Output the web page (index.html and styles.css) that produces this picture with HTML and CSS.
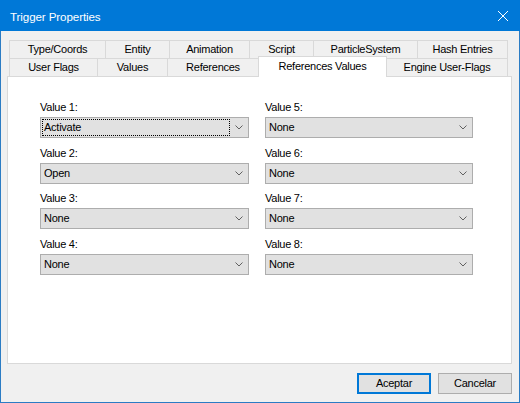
FILE: index.html
```html
<!DOCTYPE html>
<html>
<head>
<meta charset="utf-8">
<link rel="stylesheet" href="styles.css">
</head>
<body>
<div class="window">
  <div class="titlebar">
    <span class="title">Trigger Properties</span>
    <svg class="close" width="12" height="12" viewBox="0 0 12 12"><path d="M1 1 L11 11 M11 1 L1 11" stroke="#fff" stroke-width="1" fill="none"/></svg>
  </div>
  <div class="client">
    <div class="tabctl">
      <div class="tabrow">
        <div class="tab t-type">Type/Coords</div>
        <div class="tab t-entity">Entity</div>
        <div class="tab t-anim">Animation</div>
        <div class="tab t-script">Script</div>
        <div class="tab t-particle">ParticleSystem</div>
        <div class="tab t-hash last">Hash Entries</div>
      </div>
      <div class="tabrow">
        <div class="tab t-user">User Flags</div>
        <div class="tab t-values">Values</div>
        <div class="tab t-refs">References</div>
        <div class="tab t-refvals selected">References Values</div>
        <div class="tab t-engine last">Engine User-Flags</div>
      </div>
      <div class="panel">
        <div class="fields">
          <div class="field"><div class="label">Value 1:</div><div class="combo"><span class="value focus">Activate</span><span class="arrow"><svg width="8" height="5" viewBox="0 0 8 5"><polyline points="0.5,0.5 4,4 7.5,0.5" fill="none" stroke="#606060" stroke-width="1"/></svg></span></div></div>
          <div class="field"><div class="label">Value 2:</div><div class="combo"><span class="value">Open</span><span class="arrow"><svg width="8" height="5" viewBox="0 0 8 5"><polyline points="0.5,0.5 4,4 7.5,0.5" fill="none" stroke="#606060" stroke-width="1"/></svg></span></div></div>
          <div class="field"><div class="label">Value 3:</div><div class="combo"><span class="value">None</span><span class="arrow"><svg width="8" height="5" viewBox="0 0 8 5"><polyline points="0.5,0.5 4,4 7.5,0.5" fill="none" stroke="#606060" stroke-width="1"/></svg></span></div></div>
          <div class="field"><div class="label">Value 4:</div><div class="combo"><span class="value">None</span><span class="arrow"><svg width="8" height="5" viewBox="0 0 8 5"><polyline points="0.5,0.5 4,4 7.5,0.5" fill="none" stroke="#606060" stroke-width="1"/></svg></span></div></div>
          <div class="field"><div class="label">Value 5:</div><div class="combo"><span class="value">None</span><span class="arrow"><svg width="8" height="5" viewBox="0 0 8 5"><polyline points="0.5,0.5 4,4 7.5,0.5" fill="none" stroke="#606060" stroke-width="1"/></svg></span></div></div>
          <div class="field"><div class="label">Value 6:</div><div class="combo"><span class="value">None</span><span class="arrow"><svg width="8" height="5" viewBox="0 0 8 5"><polyline points="0.5,0.5 4,4 7.5,0.5" fill="none" stroke="#606060" stroke-width="1"/></svg></span></div></div>
          <div class="field"><div class="label">Value 7:</div><div class="combo"><span class="value">None</span><span class="arrow"><svg width="8" height="5" viewBox="0 0 8 5"><polyline points="0.5,0.5 4,4 7.5,0.5" fill="none" stroke="#606060" stroke-width="1"/></svg></span></div></div>
          <div class="field"><div class="label">Value 8:</div><div class="combo"><span class="value">None</span><span class="arrow"><svg width="8" height="5" viewBox="0 0 8 5"><polyline points="0.5,0.5 4,4 7.5,0.5" fill="none" stroke="#606060" stroke-width="1"/></svg></span></div></div>
        </div>
      </div>
    </div>
    <div class="buttons">
      <div class="btn default">Aceptar</div>
      <div class="btn">Cancelar</div>
    </div>
  </div>
</div>
</body>
</html>
```

FILE: styles.css
```css
html, body {
  margin: 0;
  padding: 0;
  background: #ffffff;
}
body {
  font-family: "Liberation Sans", Arial, sans-serif;
  font-size: 11px;
  letter-spacing: -0.25px;
  color: #000;
}
.window {
  width: 520px;
  height: 403px;
  box-sizing: border-box;
  border: 1px solid #2b7cc4;
  border-top: none;
  background: #f0f0f0;
  display: flex;
  flex-direction: column;
}
.titlebar {
  height: 31px;
  margin: 0 -1px;
  background: #0078d7;
  display: flex;
  align-items: center;
  padding: 0 10px 0 10px;
  flex-shrink: 0;
}
.title {
  color: #fff;
  font-size: 11.6px;
  letter-spacing: -0.1px;
  flex: 1;
  margin-top: 1px;
}
.close {
  display: block;
  margin-right: 1px;
}
.client {
  flex: 1;
  padding: 9px 0 0 6px;
  display: flex;
  flex-direction: column;
}
.tabctl {
  width: 505px;
}
.tabrow {
  display: flex;
  height: 18px;
  padding-left: 2px;
}
.tab {
  box-sizing: border-box;
  height: 18px;
  border-top: 1px solid #d9d9d9;
  border-left: 1px solid #d9d9d9;
  background: #f0f0f0;
  text-align: center;
  line-height: 17px;
  white-space: nowrap;
}
.tab.last {
  border-right: 1px solid #d9d9d9;
}
.t-type { width: 96px; }
.t-entity { width: 64px; }
.t-anim { width: 80px; }
.t-script { width: 64px; }
.t-particle { width: 104px; }
.t-hash { width: 91px; }
.t-user { width: 88px; }
.t-values { width: 70px; }
.t-refs { width: 91px; }
.t-refvals { width: 129px; }
.t-engine { width: 121px; }
.tab.selected {
  position: relative;
  z-index: 1;
  height: 21px;
  margin-top: -2px;
  background: #fff;
  border-right: 1px solid #d9d9d9;
  line-height: 19px;
}
.tab.selected + .tab {
  border-left: none;
}
.panel {
  box-sizing: border-box;
  height: 288px;
  background: #fff;
  border: 1px solid #d9d9d9;
  padding: 23px 0 0 32px;
}
.fields {
  display: grid;
  grid-template-columns: 209px 208px;
  grid-template-rows: repeat(4, auto);
  grid-auto-flow: column;
  column-gap: 16px;
  row-gap: 7.7px;
}
.label {
  height: 14px;
  line-height: 14px;
  margin-bottom: 3px;
}
.combo {
  box-sizing: border-box;
  height: 21px;
  border: 1px solid #adadad;
  background: #e1e1e1;
  display: flex;
  align-items: stretch;
  padding: 1px 0 1px 1px;
}
.value {
  flex: 1;
  box-sizing: border-box;
  border: 1px solid transparent;
  padding-left: 1px;
  line-height: 15px;
}
.value.focus {
  border: 1px dotted #000;
}
.arrow {
  width: 18px;
  display: flex;
  align-items: center;
  justify-content: center;
}
.arrow svg {
  display: block;
}
.buttons {
  display: flex;
  justify-content: flex-end;
  gap: 7px;
  width: 505px;
  margin-top: 9px;
}
.btn {
  box-sizing: border-box;
  width: 74px;
  height: 21px;
  border: 1px solid #adadad;
  background: #e1e1e1;
  text-align: center;
  line-height: 19px;
}
.btn.default {
  border: 2px solid #0078d7;
  line-height: 17px;
}
```
